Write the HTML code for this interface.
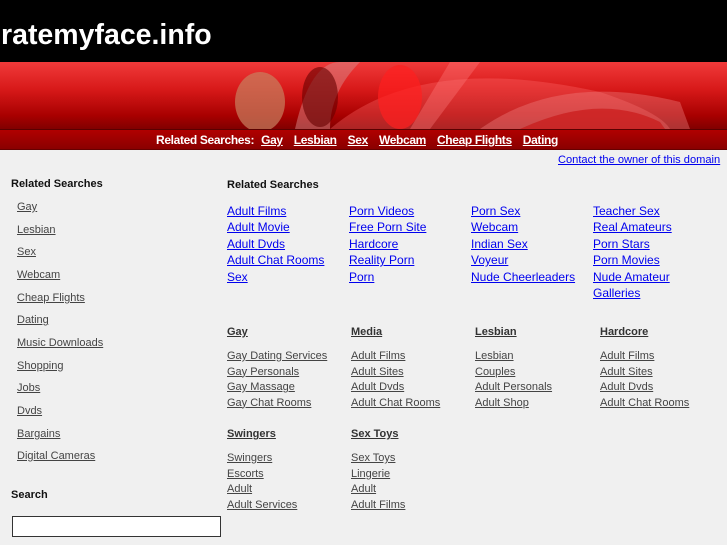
<!DOCTYPE html>
<html><head><style>
*{margin:0;padding:0;box-sizing:border-box}
body{width:727px;height:545px;overflow:hidden;background:#f0f0f0;font-family:"Liberation Sans",sans-serif;position:relative}
.a{position:absolute;white-space:nowrap}
#hd{position:absolute;left:0;top:0;width:727px;height:62px;background:#000}
#hd span{position:absolute;left:1px;top:19px;color:#fff;font-size:28.5px;font-weight:bold;letter-spacing:0px}
#bn{position:absolute;left:0;top:62px;width:727px;height:67px;background:linear-gradient(#f03a3a,#d81a1a 40%,#a80000 80%,#800000);overflow:hidden}
#bar{position:absolute;left:0;top:129px;width:727px;height:21px;background:linear-gradient(#b00000,#8a0000);border-top:1px solid #5a0000;border-bottom:1px solid #600}
#bar div{position:absolute;top:3px;left:156px;color:#fff;font-size:12px;font-weight:bold;letter-spacing:-0.35px}
#bar u{margin-left:11px}
.s{font-size:11px;color:#444;text-decoration:underline}
.b{font-size:12px;color:#0000ee;text-decoration:underline}
.h{font-size:11px;font-weight:bold;color:#111}
.ch{font-size:11px;font-weight:bold;color:#333;text-decoration:underline}
</style></head><body>
<div id="hd"><span>ratemyface.info</span></div>
<div id="bn">
<svg width="727" height="67" style="position:absolute;left:0;top:0">
<path d="M330 67 Q420 -10 600 30 Q660 50 670 67Z" fill="#ff6a6a" opacity="0.35"/>
<path d="M480 67 Q560 10 680 40 L690 67Z" fill="#f08080" opacity="0.4"/>
<path d="M520 67 Q600 30 660 60 L665 67Z" fill="#c81010" opacity="0.6"/>
<ellipse cx="260" cy="40" rx="25" ry="30" fill="#c88060" opacity="0.7"/>
<path d="M295 67 Q310 0 340 0 L360 0 Q330 30 330 67Z" fill="#d88888" opacity="0.5"/>
<ellipse cx="320" cy="35" rx="18" ry="30" fill="#600" opacity="0.6"/>
<ellipse cx="400" cy="35" rx="22" ry="32" fill="#ff2020" opacity="0.7"/>
<path d="M450 0 L480 0 L430 67 L410 67Z" fill="#ff8080" opacity="0.35"/>
</svg></div>
<div id="bar"><div>Related Searches: <u style="margin-left:4px">Gay</u><u>Lesbian</u><u>Sex</u><u>Webcam</u><u>Cheap Flights</u><u>Dating</u></div></div>
<div class="a" style="left:558px;top:154px;font-size:11.1px;color:#0000ee;text-decoration:underline">Contact the owner of this domain</div>

<div class="a h" style="left:11px;top:178px">Related Searches</div>
<div class="a s" style="left:17px;top:201px">Gay</div>
<div class="a s" style="left:17px;top:224px">Lesbian</div>
<div class="a s" style="left:17px;top:246px">Sex</div>
<div class="a s" style="left:17px;top:269px">Webcam</div>
<div class="a s" style="left:17px;top:292px">Cheap Flights</div>
<div class="a s" style="left:17px;top:314px">Dating</div>
<div class="a s" style="left:17px;top:337px">Music Downloads</div>
<div class="a s" style="left:17px;top:360px">Shopping</div>
<div class="a s" style="left:17px;top:382px">Jobs</div>
<div class="a s" style="left:17px;top:405px">Dvds</div>
<div class="a s" style="left:17px;top:428px">Bargains</div>
<div class="a s" style="left:17px;top:450px">Digital Cameras</div>
<div class="a h" style="left:11px;top:489px">Search</div>
<div class="a" style="left:12px;top:516px;width:209px;height:21px;background:#fff;border:1px solid #333"></div>

<div class="a h" style="left:227px;top:179px">Related Searches</div>
<div class="a b" style="left:227px;top:203px;line-height:16.4px">Adult Films<br>Adult Movie<br>Adult Dvds<br>Adult Chat Rooms<br>Sex</div>
<div class="a b" style="left:349px;top:203px;line-height:16.4px">Porn Videos<br>Free Porn Site<br>Hardcore<br>Reality Porn<br>Porn</div>
<div class="a b" style="left:471px;top:203px;line-height:16.4px">Porn Sex<br>Webcam<br>Indian Sex<br>Voyeur<br>Nude Cheerleaders</div>
<div class="a b" style="left:593px;top:203px;line-height:16.4px">Teacher Sex<br>Real Amateurs<br>Porn Stars<br>Porn Movies<br>Nude Amateur<br>Galleries</div>

<div class="a ch" style="left:227px;top:326px">Gay</div>
<div class="a ch" style="left:351px;top:326px">Media</div>
<div class="a ch" style="left:475px;top:326px">Lesbian</div>
<div class="a ch" style="left:600px;top:326px">Hardcore</div>
<div class="a s" style="left:227px;top:349px;line-height:15.5px">Gay Dating Services<br>Gay Personals<br>Gay Massage<br>Gay Chat Rooms</div>
<div class="a s" style="left:351px;top:349px;line-height:15.5px">Adult Films<br>Adult Sites<br>Adult Dvds<br>Adult Chat Rooms</div>
<div class="a s" style="left:475px;top:349px;line-height:15.5px">Lesbian<br>Couples<br>Adult Personals<br>Adult Shop</div>
<div class="a s" style="left:600px;top:349px;line-height:15.5px">Adult Films<br>Adult Sites<br>Adult Dvds<br>Adult Chat Rooms</div>
<div class="a ch" style="left:227px;top:428px">Swingers</div>
<div class="a ch" style="left:351px;top:428px">Sex Toys</div>
<div class="a s" style="left:227px;top:451px;line-height:15.5px">Swingers<br>Escorts<br>Adult<br>Adult Services</div>
<div class="a s" style="left:351px;top:451px;line-height:15.5px">Sex Toys<br>Lingerie<br>Adult<br>Adult Films</div>
</body></html>
